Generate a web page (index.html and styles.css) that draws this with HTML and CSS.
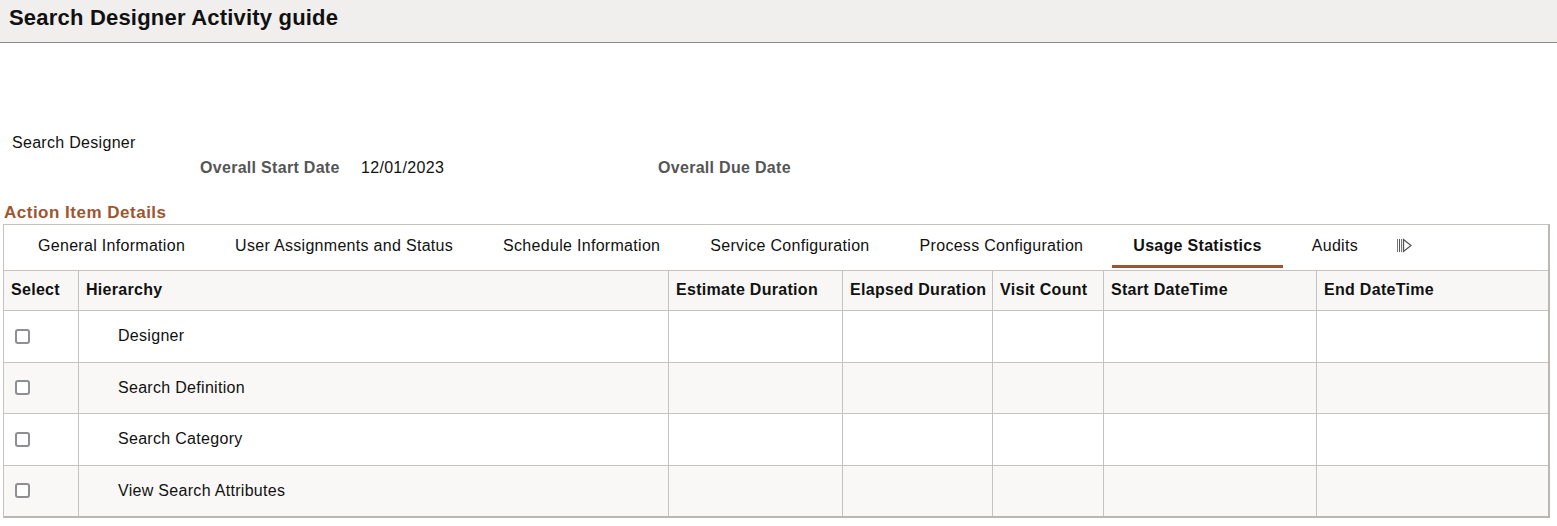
FILE: index.html
```html
<!DOCTYPE html>
<html lang="en">
<head>
<meta charset="utf-8">
<title>Search Designer Activity guide</title>
<link rel="stylesheet" href="styles.css">
</head>
<body>
<header class="page-header">
  <h1 class="page-title">Search Designer Activity guide</h1>
</header>
<main class="content">
  <div class="activity-name">Search Designer</div>
  <div class="dates">
    <span class="date-label">Overall Start Date</span>
    <span class="date-value">12/01/2023</span>
    <span class="date-label">Overall Due Date</span>
  </div>
  <h2 class="section-title">Action Item Details</h2>
  <div class="panel">
    <nav class="tabs">
      <a class="tab">General Information</a>
      <a class="tab">User Assignments and Status</a>
      <a class="tab">Schedule Information</a>
      <a class="tab">Service Configuration</a>
      <a class="tab">Process Configuration</a>
      <a class="tab tab-active">Usage Statistics</a>
      <a class="tab">Audits</a>
      <span class="tab-more" aria-label="More tabs">
        <svg width="16" height="15" viewBox="0 0 16 15">
          <rect x="0" y="1" width="1" height="13" fill="#777"/>
          <rect x="2" y="1" width="1" height="13" fill="#555"/>
          <rect x="4" y="1" width="1" height="13" fill="#777"/>
          <path d="M6.5 1.5 L14 7.5 L6.5 13.5 Z" fill="none" stroke="#555" stroke-width="1.3" stroke-linejoin="miter"/>
        </svg>
      </span>
    </nav>
    <div class="grid" role="table">
      <div class="row row-head" role="row">
        <div class="cell" role="columnheader">Select</div>
        <div class="cell" role="columnheader">Hierarchy</div>
        <div class="cell" role="columnheader">Estimate Duration</div>
        <div class="cell" role="columnheader">Elapsed Duration</div>
        <div class="cell" role="columnheader">Visit Count</div>
        <div class="cell" role="columnheader">Start DateTime</div>
        <div class="cell" role="columnheader">End DateTime</div>
      </div>
      <div class="row" role="row">
        <div class="cell cell-check"><span class="checkbox"></span></div>
        <div class="cell cell-name">Designer</div>
        <div class="cell"></div><div class="cell"></div><div class="cell"></div><div class="cell"></div><div class="cell"></div>
      </div>
      <div class="row row-alt" role="row">
        <div class="cell cell-check"><span class="checkbox"></span></div>
        <div class="cell cell-name">Search Definition</div>
        <div class="cell"></div><div class="cell"></div><div class="cell"></div><div class="cell"></div><div class="cell"></div>
      </div>
      <div class="row" role="row">
        <div class="cell cell-check"><span class="checkbox"></span></div>
        <div class="cell cell-name">Search Category</div>
        <div class="cell"></div><div class="cell"></div><div class="cell"></div><div class="cell"></div><div class="cell"></div>
      </div>
      <div class="row row-alt" role="row">
        <div class="cell cell-check"><span class="checkbox"></span></div>
        <div class="cell cell-name">View Search Attributes</div>
        <div class="cell"></div><div class="cell"></div><div class="cell"></div><div class="cell"></div><div class="cell"></div>
      </div>
    </div>
  </div>
</main>
</body>
</html>
```
FILE: styles.css
```css
* { box-sizing: border-box; }
body {
  margin: 0;
  font-family: "Liberation Sans", Arial, sans-serif;
  font-size: 16px;
  letter-spacing: 0.3px;
  color: #111;
  background: #fff;
}
.page-header {
  height: 43px;
  background: #f0efed;
  border-bottom: 1px solid #8c8a88;
}
.page-title {
  margin: 0;
  padding-left: 9px;
  font-size: 22px;
  letter-spacing: 0.2px;
  font-weight: bold;
  line-height: 35px;
  color: #111;
}
.content { padding: 0; }
.activity-name {
  margin-top: 90px;
  padding-left: 12px;
  line-height: 20px;
  color: #111;
}
.dates {
  margin-top: 5px;
  padding-left: 200px;
  display: grid;
  grid-template-columns: 161px 297px auto;
  line-height: 20px;
  white-space: nowrap;
}
.date-label {
  font-weight: bold;
  color: #555;
}
.date-value { color: #111; }
.section-title {
  margin: 25px 0 1px 0;
  padding-left: 4px;
  font-size: 17px;
  letter-spacing: 0.5px;
  font-weight: bold;
  line-height: 20px;
  color: #9e5631;
}
.panel {
  margin-left: 3px;
  width: 1547px;
  border-top: 1px solid #c6c2be;
  border-left: 1px solid #c6c2be;
  border-right: 2px solid #bcb7b1;
  border-bottom: 2px solid #bcb7b1;
}
.tabs {
  display: flex;
  align-items: flex-start;
  gap: 8px;
  padding-left: 13px;
  height: 45px;
}
.tab {
  display: block;
  height: 43px;
  padding: 0 21px;
  line-height: 41px;
  border-bottom: 3px solid transparent;
  color: #111;
  white-space: nowrap;
  cursor: pointer;
}
.tab-active {
  font-weight: bold;
  border-bottom-color: #9e5631;
}
.tab-more {
  display: flex;
  align-items: center;
  height: 40px;
  padding: 0 10px;
}
.row {
  display: grid;
  grid-template-columns: 74px 590px 174px 150px 111px 213px 232px;
  border-top: 1px solid #c6c2be;
  height: 51.5px;
  background: #fff;
}
.row-alt { background: #f9f8f6; }
.row-head {
  height: 40px;
  background: #f8f7f5;
  font-weight: bold;
  color: #111;
}
.cell {
  display: flex;
  align-items: center;
  padding-left: 7px;
  border-left: 1px solid #c6c2be;
  white-space: nowrap;
}
.cell:first-child { border-left: none; }
.row-head .cell { padding-bottom: 1px; }
.cell-check { padding-left: 11px; }
.cell-name { padding-left: 39px; }
.checkbox {
  display: inline-block;
  width: 15px;
  height: 15px;
  border: 2px solid #8e8e93;
  border-radius: 3px;
  background: #fff;
}
```
